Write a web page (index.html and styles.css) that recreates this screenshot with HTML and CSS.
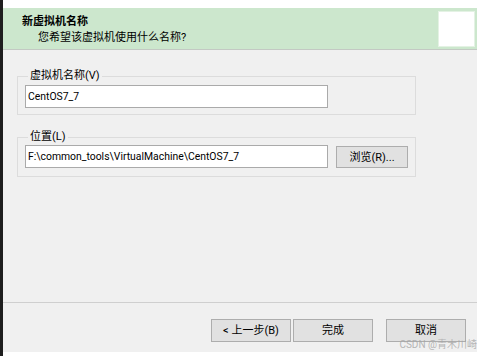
FILE: index.html
```html
<!DOCTYPE html>
<html lang="zh-CN">
<head>
<meta charset="utf-8">
<title>新建虚拟机向导</title>
<link rel="stylesheet" href="styles.css">
</head>
<body>
<div class="screen">
  <div class="edge"></div>
  <div class="window">
    <div class="header">
      <div class="header-text">
        <div class="title">新虚拟机名称</div>
        <div class="subtitle">您希望该虚拟机使用什么名称?</div>
      </div>
      <div class="logo-box"></div>
    </div>
    <div class="main">
      <div class="content">
        <fieldset class="group group-name">
          <legend>虚拟机名称(V)</legend>
          <div class="field-row">
            <div class="input">CentOS7_7</div>
          </div>
        </fieldset>
        <fieldset class="group group-path">
          <legend>位置(L)</legend>
          <div class="field-row">
            <div class="input">F:\common_tools\VirtualMachine\CentOS7_7</div>
            <button class="btn btn-browse">浏览(R)...</button>
          </div>
        </fieldset>
      </div>
      <div class="footer">
        <div class="buttons">
          <button class="btn btn-nav">&lt; 上一步(B)</button>
          <button class="btn btn-nav">完成</button>
          <button class="btn btn-nav btn-cancel">取消</button>
        </div>
      </div>
      <div class="watermark">CSDN @青木川崎</div>
    </div>
  </div>
</div>
</body>
</html>
```
FILE: styles.css
```css
* { box-sizing: border-box; }
html, body {
  margin: 0;
  padding: 0;
  background: #ffffff;
}
body {
  width: 480px;
  height: 356px;
  overflow: hidden;
  font-family: Roboto, "Noto Sans CJK SC", sans-serif;
  font-size: 11px;
  color: #000;
}
.screen {
  display: flex;
  height: 356px;
}
.edge {
  width: 3px;
  background: #1e1e1e;
  flex: none;
}
.window {
  width: 474px;
  margin-top: 8px;
  height: 344px;
  display: flex;
  flex-direction: column;
}
.header {
  height: 42px;
  background: #cce7cd;
  border-bottom: 1px solid #c3c9c3;
  display: flex;
  justify-content: space-between;
  padding: 3px 2px 0 19px;
  flex: none;
}
.header-text {
  padding-top: 3px;
  line-height: 16px;
}
.title {
  font-weight: bold;
}
.subtitle {
  padding-left: 16px;
}
.logo-box {
  width: 37px;
  height: 36px;
  background: #ffffff;
  border: 1px solid #e4f2e4;
}
.main {
  flex: 1;
  background: #f0f0f0;
  display: flex;
  flex-direction: column;
  position: relative;
}
.content {
  padding: 18px 0 0 14px;
  flex: 1;
}
.group {
  width: 399px;
  margin: 0;
  border: 1px solid #dcdcdc;
  padding: 1px 6px 6px 7px;
}
.group legend {
  padding: 0 2px;
  margin-left: 3px;
  line-height: 16px;
}
.group-path {
  margin-top: 14px;
  padding-top: 0;
  padding-bottom: 8px;
}
.field-row {
  display: flex;
  align-items: center;
  gap: 8px;
}
.input {
  width: 303px;
  height: 23px;
  background: #ffffff;
  border: 1px solid #aaaaaa;
  padding: 0 2px;
  font-size: 10.4px;
  line-height: 21px;
  white-space: nowrap;
  overflow: hidden;
}
.btn {
  font-family: inherit;
  font-size: 11px;
  color: #000;
  background: #e1e1e1;
  border: 1px solid #adadad;
  padding: 0;
  height: 23px;
  line-height: 21px;
  margin: 0;
}
.btn-browse {
  width: 72px;
  height: 22px;
}
.footer {
  border-top: 1px solid #cfcfcf;
  height: 50px;
  flex: none;
  padding: 16px 0 0 208px;
}
.buttons {
  display: flex;
}
.btn-nav {
  width: 80px;
  margin-right: 2px;
}
.btn-cancel {
  margin-left: 11px;
}
.watermark {
  position: absolute;
  right: 0;
  bottom: 1px;
  font-size: 10px;
  line-height: 13px;
  color: rgba(165, 165, 165, 0.8);
}
```
